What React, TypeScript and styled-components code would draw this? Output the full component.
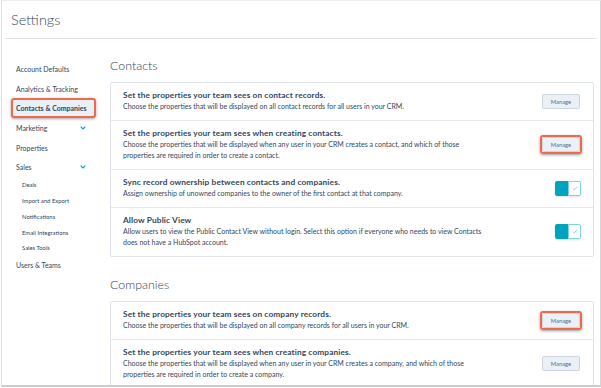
import styled, { createGlobalStyle } from "styled-components";

const GlobalStyle = createGlobalStyle`
  html, body {
    margin: 0;
    padding: 0;
    background: #ffffff;
  }
  body {
    font-family: Lato, "Open Sans", "Liberation Sans", sans-serif;
    color: #33475b;
  }
`;

const Frame = styled.div`
  box-sizing: border-box;
  margin-left: 1px;
  width: 600px;
  height: 387px;
  border-top: 1px solid #eeeeee;
  border-left: 1px solid #e2e2e2;
  border-right: 1px solid #d6d6d6;
  border-bottom: 2px solid #cccccc;
  overflow: hidden;
  display: flex;
  flex-direction: column;
`;

const Header = styled.header`
  height: 37px;
  margin: 0 3px;
  padding-left: 6px;
  border-bottom: 1px solid #dfe3eb;
  display: flex;
  align-items: center;
`;

const PageTitle = styled.h1`
  margin: 0;
  font-size: 14.4px;
  font-weight: 300;
  color: #33475b;
`;

const Body = styled.div`
  display: grid;
  grid-template-columns: 108px 1fr;
  flex: 1;
  min-height: 0;
`;

const Sidebar = styled.nav`
  padding-top: 20px;
  display: flex;
  flex-direction: column;
`;

interface NavItemProps {
  $active?: boolean;
}

const NavItem = styled.div<NavItemProps>`
  margin-left: 9px;
  width: 85px;
  box-sizing: border-box;
  height: 19.7px;
  padding: 0 10px 0 5px;
  display: flex;
  align-items: center;
  justify-content: space-between;
  white-space: nowrap;
  font-size: 7px;
  font-weight: ${({ $active }) => ($active ? 700 : 400)};
  color: #33475b;
  border-radius: 3px;
  background: ${({ $active }) => ($active ? "#eaf0f6" : "transparent")};
  box-shadow: ${({ $active }) =>
    $active ? "inset 0 0 0 2px #ec6b4c, 0 1px 3px rgba(0, 0, 0, 0.35)" : "none"};
`;

const SubItem = styled.div`
  margin-left: 20px;
  height: 15.7px;
  display: flex;
  align-items: center;
  font-size: 5.9px;
  color: #33475b;
`;

const Main = styled.main`
  padding: 18px 6px 0 0;
`;

const SectionTitle = styled.h2<{ $first?: boolean }>`
  margin: ${({ $first }) => ($first ? "0" : "19px")} 0 7px 0;
  height: 18px;
  line-height: 18px;
  font-size: 12.4px;
  font-weight: 300;
  color: #33475b;
`;

const Card = styled.section`
  border: 1px solid #dfe3eb;
  border-radius: 2px;
  background: #ffffff;
`;

const Row = styled.div`
  display: flex;
  align-items: center;
  justify-content: space-between;
  padding: 7px 11px 8px 12px;
  & + & {
    border-top: 1px solid #e5e9f0;
  }
`;

const RowText = styled.div`
  white-space: nowrap;
`;

const RowTitle = styled.div`
  font-size: 8.3px;
  font-weight: 700;
  letter-spacing: 0.12px;
  line-height: 11px;
  color: #33475b;
`;

const RowDesc = styled.div`
  font-size: 7px;
  line-height: 11px;
  color: #33475b;
`;

const Highlight = styled.div<{ $on?: boolean }>`
  padding: 2px;
  border-radius: 3px;
  box-shadow: ${({ $on }) =>
    $on ? "inset 0 0 0 2px #ec6b4c, 0 1px 3px rgba(0, 0, 0, 0.4)" : "none"};
`;

const ManageButton = styled.button`
  width: 38px;
  height: 15px;
  padding: 0;
  border: 1px solid #cbd6e2;
  border-radius: 2px;
  background: #eaf0f6;
  font-family: inherit;
  font-size: 5.8px;
  color: #506e91;
  display: flex;
  align-items: center;
  justify-content: center;
`;

const Toggle = styled.div`
  width: 26px;
  height: 15px;
  display: flex;
  margin-right: 1px;
  box-shadow: 0 1px 2px rgba(0, 0, 0, 0.12);
`;

const ToggleTrack = styled.div`
  width: 13px;
  background: #00a4bd;
  border-radius: 2px 0 0 2px;
`;

const ToggleKnob = styled.div`
  box-sizing: border-box;
  width: 13px;
  border: 1px solid #7fd1de;
  border-radius: 0 2px 2px 0;
  background: #ffffff;
  display: flex;
  align-items: center;
  justify-content: center;
`;

const Chevron = () => (
  <svg width="6" height="4" viewBox="0 0 6 4">
    <polyline points="0.7,0.7 3,3 5.3,0.7" fill="none" stroke="#00a4bd" strokeWidth="1.2" />
  </svg>
);

const Check = () => (
  <svg width="6" height="5" viewBox="0 0 6 5">
    <polyline points="0.8,2.6 2.2,3.9 5.2,0.9" fill="none" stroke="#7fd1de" strokeWidth="0.9" />
  </svg>
);

type Control = "manage" | "manage-hl" | "toggle";

interface Setting {
  title: string;
  desc: string[];
  control: Control;
}

const contacts: Setting[] = [
  {
    title: "Set the properties your team sees on contact records.",
    desc: ["Choose the properties that will be displayed on all contact records for all users in your CRM."],
    control: "manage",
  },
  {
    title: "Set the properties your team sees when creating contacts.",
    desc: [
      "Choose the properties that will be displayed when any user in your CRM creates a contact, and which of those",
      "properties are required in order to create a contact.",
    ],
    control: "manage-hl",
  },
  {
    title: "Sync record ownership between contacts and companies.",
    desc: ["Assign ownership of unowned companies to the owner of the first contact at that company."],
    control: "toggle",
  },
  {
    title: "Allow Public View",
    desc: [
      "Allow users to view the Public Contact View without login. Select this option if everyone who needs to view Contacts",
      "does not have a HubSpot account.",
    ],
    control: "toggle",
  },
];

const companies: Setting[] = [
  {
    title: "Set the properties your team sees on company records.",
    desc: ["Choose the properties that will be displayed on all company records for all users in your CRM."],
    control: "manage-hl",
  },
  {
    title: "Set the properties your team sees when creating companies.",
    desc: [
      "Choose the properties that will be displayed when any user in your CRM creates a company, and which of those",
      "properties are required in order to create a company.",
    ],
    control: "manage",
  },
];

const renderControl = (control: Control) => {
  if (control === "toggle") {
    return (
      <Toggle>
        <ToggleTrack />
        <ToggleKnob>
          <Check />
        </ToggleKnob>
      </Toggle>
    );
  }
  return (
    <Highlight $on={control === "manage-hl"}>
      <ManageButton>Manage</ManageButton>
    </Highlight>
  );
};

const SettingsCard = ({ items }: { items: Setting[] }) => (
  <Card>
    {items.map((item) => (
      <Row key={item.title}>
        <RowText>
          <RowTitle>{item.title}</RowTitle>
          {item.desc.map((line) => (
            <RowDesc key={line}>{line}</RowDesc>
          ))}
        </RowText>
        {renderControl(item.control)}
      </Row>
    ))}
  </Card>
);

export default function App() {
  return (
    <>
      <GlobalStyle />
      <Frame>
        <Header>
          <PageTitle>Settings</PageTitle>
        </Header>
        <Body>
          <Sidebar>
            <NavItem>Account Defaults</NavItem>
            <NavItem>Analytics &amp; Tracking</NavItem>
            <NavItem $active>Contacts &amp; Companies</NavItem>
            <NavItem>
              Marketing
              <Chevron />
            </NavItem>
            <NavItem>Properties</NavItem>
            <NavItem>
              Sales
              <Chevron />
            </NavItem>
            <SubItem>Deals</SubItem>
            <SubItem>Import and Export</SubItem>
            <SubItem>Notifications</SubItem>
            <SubItem>Email Integrations</SubItem>
            <SubItem>Sales Tools</SubItem>
            <NavItem>Users &amp; Teams</NavItem>
          </Sidebar>
          <Main>
            <SectionTitle $first>Contacts</SectionTitle>
            <SettingsCard items={contacts} />
            <SectionTitle>Companies</SectionTitle>
            <SettingsCard items={companies} />
          </Main>
        </Body>
      </Frame>
    </>
  );
}
